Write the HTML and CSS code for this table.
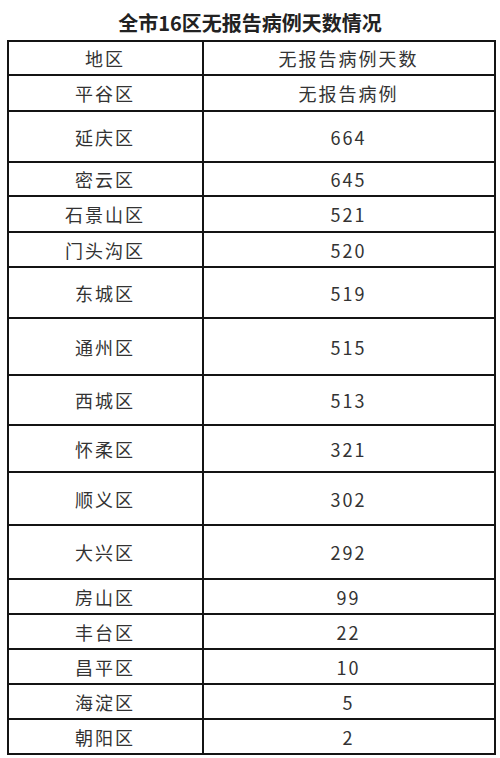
FILE: index.html
```html
<!DOCTYPE html>
<html lang="zh">
<head>
<meta charset="utf-8">
<link rel="stylesheet" href="styles.css">
</head>
<body>
<div class="page">
  <h1 class="title">全市16区无报告病例天数情况</h1>
  <table class="grid">
    <colgroup><col class="c1"><col class="c2"></colgroup>
    <tr class="h34"><td>地区</td><td>无报告病例天数</td></tr>
    <tr class="h36"><td>平谷区</td><td>无报告病例</td></tr>
    <tr class="h51"><td>延庆区</td><td>664</td></tr>
    <tr class="h34"><td>密云区</td><td>645</td></tr>
    <tr class="h36"><td>石景山区</td><td>521</td></tr>
    <tr class="h35"><td>门头沟区</td><td>520</td></tr>
    <tr class="h51"><td>东城区</td><td>519</td></tr>
    <tr class="h57"><td>通州区</td><td>515</td></tr>
    <tr class="h50"><td>西城区</td><td>513</td></tr>
    <tr class="h47"><td>怀柔区</td><td>321</td></tr>
    <tr class="h53"><td>顺义区</td><td>302</td></tr>
    <tr class="h54"><td>大兴区</td><td>292</td></tr>
    <tr class="h35"><td>房山区</td><td>99</td></tr>
    <tr class="h35"><td>丰台区</td><td>22</td></tr>
    <tr class="h35"><td>昌平区</td><td>10</td></tr>
    <tr class="h35"><td>海淀区</td><td>5</td></tr>
    <tr class="h35"><td>朝阳区</td><td>2</td></tr>
  </table>
</div>
</body>
</html>
```
FILE: styles.css
```css
html, body {
  margin: 0;
  padding: 0;
  background: #ffffff;
}
.page {
  width: 500px;
  font-family: "Noto Sans CJK SC", "Noto Sans", sans-serif;
  color: #2b2b2b;
}
.title {
  margin: 0;
  padding-top: 9px;
  height: 31px;
  line-height: 28px;
  font-size: 20px;
  font-weight: 700;
  text-align: center;
  color: #222;
  letter-spacing: 0;
}
.grid {
  margin-left: 6.5px;
  width: 489px;
  border-collapse: collapse;
  table-layout: fixed;
}
.c1 { width: 195px; }
.c2 { width: 292px; }
.grid td {
  border: 2px solid #141414;
  padding: 0;
  text-align: center;
  vertical-align: middle;
  font-size: 18px;
  letter-spacing: 2px;
  line-height: 22px;
  color: #333;
}
.h34 { height: 34px; }
.h35 { height: 35px; }
.h36 { height: 36px; }
.h47 { height: 47px; }
.h50 { height: 50px; }
.h51 { height: 51px; }
.h53 { height: 53px; }
.h54 { height: 54px; }
.h57 { height: 57px; }
```
